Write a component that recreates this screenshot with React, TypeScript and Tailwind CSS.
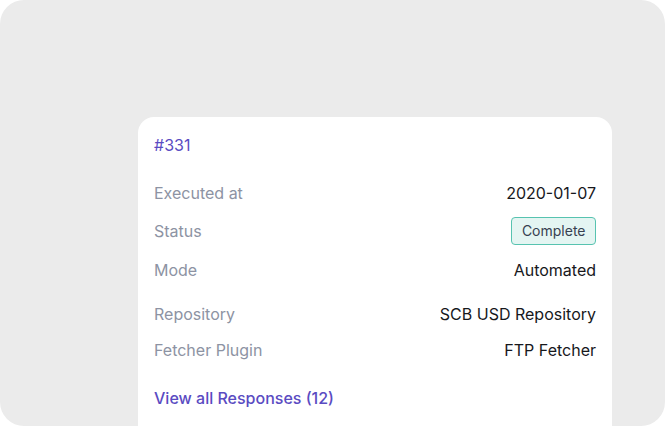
export default function App() {
  const font = { fontFamily: "Inter, 'Noto Sans', sans-serif" };
  return (
    <div className="w-[665px] h-[426px] bg-white" style={font}>
      <div className="w-full h-full bg-[#ebebeb] rounded-[24px] overflow-hidden pt-[117px] pl-[138px] pr-[53px]">
        <div className="h-full bg-white rounded-t-[16px] px-[16px] text-[16px] leading-[20px]">
          <div className="pt-[18px] text-[#5a4bc2]">#331</div>
          <div className="mt-[28px] flex justify-between items-center">
            <span className="text-[#8d93a3]">Executed at</span>
            <span className="text-[#17181c]">2020-01-07</span>
          </div>
          <div className="mt-[14px] flex justify-between items-center h-[28px]">
            <span className="text-[#8d93a3]">Status</span>
            <span className="h-[28px] px-[9.5px] flex items-center rounded-[4px] border border-[#57c3b0] bg-[#e4f5f2] text-[#374151] text-[14px]">Complete</span>
          </div>
          <div className="mt-[15px] flex justify-between items-center">
            <span className="text-[#8d93a3]">Mode</span>
            <span className="text-[#17181c]">Automated</span>
          </div>
          <div className="mt-[24px] flex justify-between items-center">
            <span className="text-[#8d93a3]">Repository</span>
            <span className="text-[#17181c]">SCB USD Repository</span>
          </div>
          <div className="mt-[16px] flex justify-between items-center">
            <span className="text-[#8d93a3]">Fetcher Plugin</span>
            <span className="text-[#17181c]">FTP Fetcher</span>
          </div>
          <div className="mt-[28px] text-[#5a4bc2] font-medium">View all Responses (12)</div>
        </div>
      </div>
    </div>
  );
}
